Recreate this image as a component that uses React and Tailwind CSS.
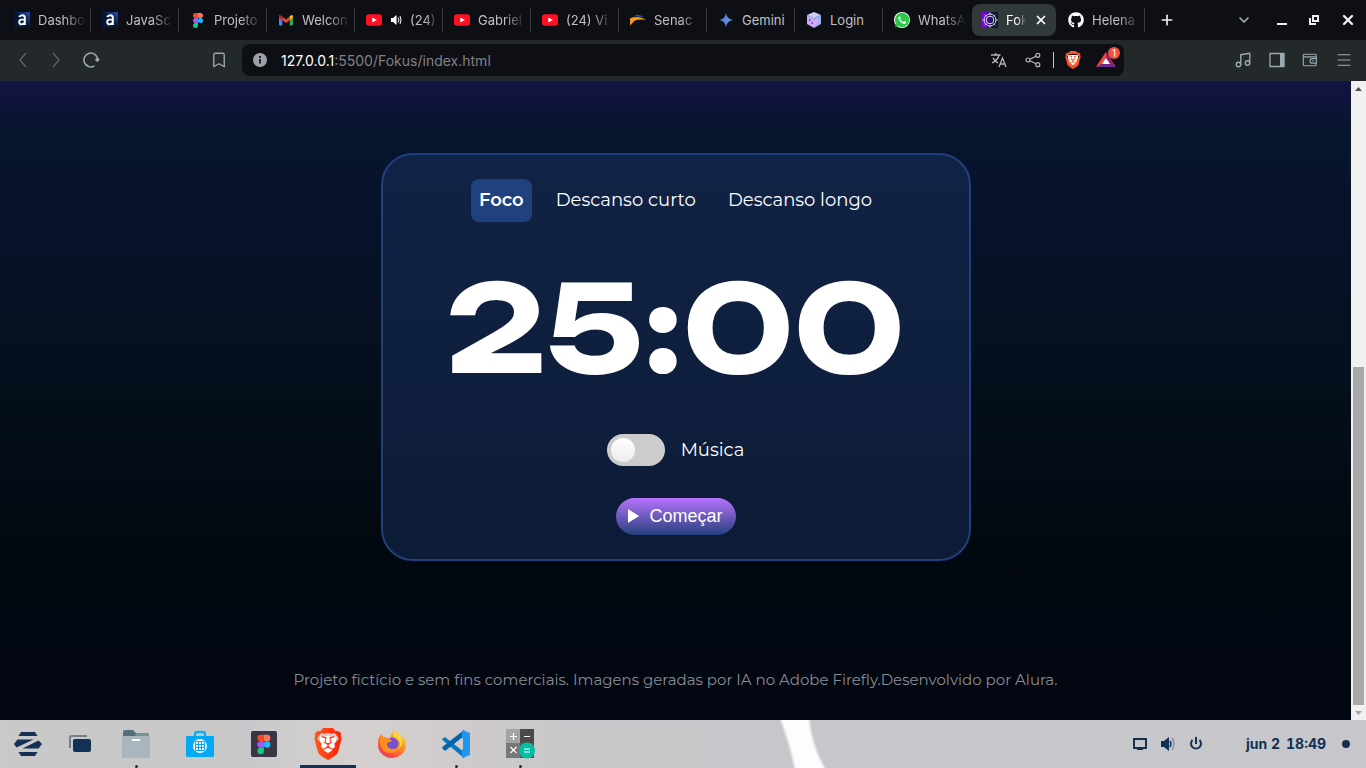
import { useState } from "react";
import { FaGithub, FaWhatsapp } from "react-icons/fa";
import { SiBrave } from "react-icons/si";
import { ChevronDown, Menu, Bookmark, Music, Plus, X } from "lucide-react";

const AluraIcon = () => (
  <svg viewBox="0 0 16 16" className="size-4">
    <defs>
      <linearGradient id="alura" x1="0" y1="1" x2="1" y2="0">
        <stop offset=".5" stopColor="#051733" />
        <stop offset="1" stopColor="#2454b8" />
      </linearGradient>
    </defs>
    <rect width="16" height="16" fill="url(#alura)" />
    <path d="M5.2 5.2Q6 3.2 8.2 3.2q2.7 0 2.7 2.8v7M10.8 7.6H7.6q-2.6.2-2.4 2.6.2 2.2 2.6 2.2 2.4-.2 3-2.6" fill="none" stroke="#fff" strokeWidth="1.9" />
  </svg>
);

const FigmaMark = () => (
  <>
    <path d="M8 1H5.5a2.5 2.5 0 0 0 0 5H8z" fill="#f24e1e" />
    <path d="M8 1h2.500a2.500 2.500 0 0 1 0 5H8z" fill="#ff7262" />
    <path d="M8 6H5.500a2.500 2.500 0 0 0 0 5H8z" fill="#a259ff" />
    <circle cx="10.500" cy="8.500" r="2.500" fill="#1abcfe" />
    <path d="M5.500 11H8v2.500A2.500 2.500 0 1 1 5.500 11z" fill="#0acf83" />
  </>
);

const FigmaIcon = () => <svg viewBox="0 0 16 16" className="size-4"><FigmaMark /></svg>;

const GmailIcon = () => (
  <svg viewBox="0 0 16 16" className="size-4">
    <path d="M1 4.500v8q0 1 1 1h2.300V6.500L2 4z" fill="#4285f4" />
    <path d="M11.700 6.500v7H14q1 0 1-1v-8L13.500 4z" fill="#34a853" />
    <path d="M11.700 8.200V4.600l1-1Q15 2.200 15 4.600v1.100z" fill="#fbbc04" />
    <path d="M4.300 8.200V4.600L8 7.400l3.700-2.800v3.600L8 11z" fill="#ea4335" />
    <path d="M1 5.700V4.500Q1 2.200 3.300 3.700l1 .9v3.600z" fill="#c5221f" />
  </svg>
);

const YoutubeIcon = () => (
  <svg viewBox="0 0 16 16" className="size-4">
    <rect y="2.300" width="16" height="11.500" rx="3" fill="#ff1022" />
    <path d="M6.300 5.500v5l4.500-2.500z" fill="#fff" />
  </svg>
);

const SpeakerSmall = () => (
  <svg viewBox="0 0 12 12" className="size-3 shrink-0" fill="#fff">
    <path d="M1 4h2l3.500-3v10L3 8H1z" />
    <path d="M8 3.500q2 2.500 0 5M10 2q2 4 0 8" fill="none" stroke="#fff" />
  </svg>
);

const SenacIcon = () => (
  <svg viewBox="0 0 16 16" className="size-4">
    <path d="M4 4.200Q9 .8 14 5.800 9 3.800 4 4.200z" fill="#23549e" />
    <path d="M0 13.500V6.200q4-1.400 9-1 4 .5 7 2.600Q5 6.500 2.500 11z" fill="#f7981d" />
  </svg>
);

const GeminiIcon = () => (
  <svg viewBox="0 0 16 16" className="size-4">
    <defs><linearGradient id="gem"><stop stopColor="#4b74d8" /><stop offset="1" stopColor="#6c9ddd" /></linearGradient></defs>
    <path d="M8 1q.9 6.100 7 7-6.100.900-7 7-.900-6.100-7-7 6.100-.900 7-7z" fill="url(#gem)" />
  </svg>
);

const CubeIcon = () => (
  <svg viewBox="0 0 16 16" className="size-4">
    <path d="M8 0l7 3-7 3.500L1 3z" fill="#c5cdfa" />
    <path d="M1 3l7 3.500V16l-7-4z" fill="#c9aaf4" />
    <path d="M15 3L8 6.500V16l7-4z" fill="#93b2ee" />
    <path d="M8 9l5-4-1 7-4 3z" fill="#d7a8f5" />
    <path d="M3 7h1.500v2H3zM5.500 10H7v2H5.500z" fill="#6d56ba" />
  </svg>
);

const WhatsIcon = () => (
  <span className="flex size-4 items-center justify-center rounded-full bg-white">
    <svg viewBox="0 0 16 16" className="size-4">
      <path d="M8 .8a7.200 7.200 0 1 1-3.400 13.500L1 15.200l1-3.500A7.200 7.200 0 0 1 8 .8z" fill="#2cc64a" />
      <path d="M5.300 4.200q-1.500 1-.6 3 1.500 3.300 4.600 4.500 2 .7 2.800-1v-.9L10.200 8.900l-1 1.100Q7 9.200 6 7.200l.8-1-.8-2z" fill="#fff" />
    </svg>
  </span>
);

const FokusIcon = () => (
  <svg viewBox="0 0 16 16" className="size-4 shrink-0">
    <defs><linearGradient id="fok"><stop stopColor="#8d00ff" /><stop offset=".7" stopColor="#0b1732" /></linearGradient></defs>
    <rect width="16" height="16" fill="url(#fok)" />
    <g fill="none" stroke="#d6d8ee">
      <circle cx="8" cy="8" r="6" />
      <circle cx="8" cy="8" r="3.800" />
      <path d="M8 0v3M8 13v3M0 8h3M13 8h3M2.500 2.500l2 2M11.500 11.500l2 2M13.500 2.500l-2 2M2.500 13.500l2-2" strokeWidth=".7" />
    </g>
  </svg>
);

const TABS = [
  { title: "Dashbo", Icon: AluraIcon },
  { title: "JavaSc", Icon: AluraIcon },
  { title: "Projeto", Icon: FigmaIcon },
  { title: "Welcon", Icon: GmailIcon },
  { title: "(24)", Icon: YoutubeIcon, audio: true },
  { title: "Gabriel", Icon: YoutubeIcon },
  { title: "(24) Vi", Icon: YoutubeIcon },
  { title: "Senac", Icon: SenacIcon },
  { title: "Gemini", Icon: GeminiIcon, whole: true },
  { title: "Login", Icon: CubeIcon, whole: true },
  { title: "WhatsA", Icon: WhatsIcon, last: true },
  { title: "Fok", Icon: FokusIcon, active: true },
  { title: "Helena", Icon: () => <FaGithub className="size-4 text-white" /> },
];

const FADE = "[mask-image:linear-gradient(to_right,black_55%,transparent)]";

function Tab({ title, Icon, audio, active, whole, last }) {
  if (active)
    return (
      <div className="mx-px my-1 flex w-21 shrink-0 items-center gap-2 rounded-lg bg-[#31393b] px-2 pl-2.5 text-white">
        <Icon />
        <button className={`min-w-0 flex-1 pt-px text-left whitespace-nowrap ${FADE}`}>{title}</button>
        <button aria-label="Fechar aba" className="shrink-0"><X className="size-3.5" strokeWidth={3} /></button>
      </div>
    );
  return (
    <button className="flex w-22 shrink-0 items-center py-2 text-left text-[#c0c0c3]">
      <span className="flex min-w-0 flex-1 items-center gap-2 pr-1 pl-[11px]">
        <span className="shrink-0"><Icon /></span>
        {audio && <SpeakerSmall />}
        <span className={`min-w-0 flex-1 pt-px whitespace-nowrap ${whole ? "" : FADE}`}>{title}</span>
      </span>
      <span className={`h-6 w-px ${last ? "" : "bg-[#3b3c3e]"}`} />
    </button>
  );
}

function TabStrip() {
  return (
    <div className="flex h-10 items-stretch bg-[#0e0f14] pl-[3px] text-[13px]">
      {TABS.map((t, i) => <Tab key={i} {...t} />)}
      <div className="flex flex-1 items-center gap-6 pr-2.5 pl-3.5 text-[#eceef0]">
        <button aria-label="Nova aba" className="mr-auto"><Plus className="size-4" strokeWidth={2.500} /></button>
        <button aria-label="Pesquisar abas"><ChevronDown className="size-4 text-[#a3b1b8]" strokeWidth={2.500} /></button>
        <div className="flex items-center gap-5">
          <button aria-label="Minimizar">
            <svg viewBox="0 0 12 12" className="size-3"><path d="M1 10h10" stroke="currentColor" strokeWidth="2" /></svg>
          </button>
          <button aria-label="Restaurar">
            <svg viewBox="0 0 12 12" className="size-3" fill="none" stroke="currentColor" strokeWidth="2"><path d="M5 2h5v5H5zM2 4v6h6" /></svg>
          </button>
          <button aria-label="Fechar"><X className="size-4" strokeWidth={3.500} /></button>
        </div>
      </div>
    </div>
  );
}

function Toolbar() {
  return (
    <div className="flex h-[41px] items-center bg-[#23292b] pb-px text-[#9aa8b0]">
      <div className="flex w-[242px] shrink-0 items-center pr-3.5 pl-3">
        <button aria-label="Voltar" className="mr-3.5 text-[#596165]">
          <svg viewBox="0 0 20 20" className="size-5" fill="none" stroke="currentColor" strokeWidth="1.500"><path d="M14 3L8 10l6 7" /></svg>
        </button>
        <button aria-label="Avançar" className="mr-4 text-[#596165]">
          <svg viewBox="0 0 20 20" className="size-5" fill="none" stroke="currentColor" strokeWidth="1.500"><path d="M7 3l6 7-6 7" /></svg>
        </button>
        <button aria-label="Recarregar">
          <svg viewBox="0 0 18 18" className="size-[18px]" fill="none" stroke="currentColor" strokeWidth="1.500">
            <path d="M12.500 14.800A6.900 6.900 0 1 1 15.700 8.500" />
            <circle cx="15.300" cy="8.800" r="2" fill="currentColor" stroke="none" />
          </svg>
        </button>
        <button aria-label="Favoritar" className="ml-auto"><Bookmark className="size-[18px]" strokeWidth={1.800} /></button>
      </div>
      <div className="flex h-8 w-[882px] min-w-0 items-center rounded-lg bg-[#0e0f14] pr-2 pl-[11px] text-[#b4b6ba]">
        <svg viewBox="0 0 14 14" className="size-3.5 shrink-0"><circle cx="7" cy="7" r="7" fill="#9b9fa8" /><path d="M7 3v2M7 6v4.500" stroke="#15161b" strokeWidth="1.800" /></svg>
        <a href="#fokus" className="ml-3.5 text-[14px] text-[#808186]"><span className="text-white">127.0.0.1</span>:5500/Fokus/index.html</a>
        <div className="ml-auto flex items-center">
          <button aria-label="Traduzir" className="mr-[18px]">
            <svg viewBox="0 0 16 16" className="size-4" fill="none" stroke="currentColor" strokeWidth="1.300"><path d="M0 3h9.500M4.700 1v2M2 6q3 4 5 5M8 3Q7 8 1 11M8 15l3.500-9L15 15M9 12h5" /></svg>
          </button>
          <button aria-label="Compartilhar">
            <svg viewBox="0 0 16 16" className="size-4" fill="none" stroke="currentColor" strokeWidth="1.200"><circle cx="3" cy="8" r="2" /><circle cx="12.800" cy="3.300" r="2" /><circle cx="12.800" cy="12.700" r="2" /><path d="M4.800 7.200L11 4.200M4.800 8.800l6.200 3" /></svg>
          </button>
          <span className="mr-2.5 ml-3 h-4 w-px bg-[#c5c6c8]" />
          <button aria-label="Brave Shields" className="relative flex text-[#fb542b]">
            <span className="absolute inset-x-1 inset-y-1 bg-white" /><SiBrave className="relative size-[18px]" />
          </button>
          <button aria-label="Brave Rewards" className="relative ml-3.5">
            <svg viewBox="0 0 20 18" className="h-[18px] w-5"><path d="M10 1L0 16h20z" fill="#662d91" /><path d="M10 1L0 16l6-3.500L10 7z" fill="#ff4724" /><path d="M10 1v6l4 6 6 3z" fill="#9e1f63" /><path d="M10 7l-4 6h8z" fill="#fff" /></svg>
            <span className="absolute -top-1 -right-1 size-3 rounded-full bg-[#fa5333] text-center text-[10px] leading-3 text-white">1</span>
          </button>
        </div>
      </div>
      <div className="ml-auto flex items-center gap-[17px] pr-[13px]">
        <button aria-label="Playlist"><Music className="size-[18px]" strokeWidth={1.800} /></button>
        <button aria-label="Painel lateral">
          <svg viewBox="0 0 16 16" className="size-4"><path d="M1 1.500h14v13H1z" fill="none" stroke="currentColor" strokeWidth="1.300" /><path d="M11 1.500h4v13h-4z" fill="currentColor" /></svg>
        </button>
        <button aria-label="Carteira">
          <svg viewBox="0 0 18 16" className="h-4 w-4" fill="none" stroke="currentColor" strokeWidth="1.300"><path d="M16 5V3q0-1.500-1.500-1.500h-11Q1.500 1.500 1.500 3v10q0 1.500 1.500 1.500h11.500q1.500 0 1.500-1.500v-1.500M1.500 4.500H15q1.200 0 1.200 1.200v5.800H11.500a2.500 2.500 0 0 1 0-5h4.500M11.500 9h1.500" /></svg>
        </button>
        <button aria-label="Menu"><Menu className="size-[18px]" strokeWidth={1.500} /></button>
      </div>
    </div>
  );
}

const MODES = ["Foco", "Descanso curto", "Descanso longo"];

function Timer() {
  const [mode, setMode] = useState(MODES[0]);
  return (
    <section className="flex w-full max-w-[590px] flex-col items-center rounded-[32px] border-2 border-[#213f7c] bg-linear-to-b from-[#112346] to-[#0c1b36] p-6 text-white">
      <nav className="flex gap-4 font-[Montserrat,Open_Sans,sans-serif] text-[18px]">
        {MODES.map((m) => (
          <button
            key={m}
            onClick={() => setMode(m)}
            className={`h-[43px] rounded-lg px-2 whitespace-nowrap ${m === mode ? "bg-[#21407e] font-semibold" : ""}`}
          >
            {m}
          </button>
        ))}
      </nav>
      <div className="mt-6 font-[Unbounded,DejaVu_Sans,sans-serif] text-[120px] leading-[164px] font-bold">25:00</div>
      <label className="mt-6 flex items-center gap-4 font-[Montserrat,Open_Sans,sans-serif] text-[18px] leading-8">
        <input type="checkbox" className="peer sr-only" />
        <span className="flex h-8 w-[58px] items-center rounded-full bg-[#ccc] p-1 peer-checked:justify-end">
          <span className="size-6 rounded-full bg-linear-to-b from-white to-[#ececec]" />
        </span>
        Música
      </label>
      <button className="mt-8 flex h-[37px] w-[120px] items-center gap-2.5 rounded-full bg-linear-to-b from-[#b872ff] to-[#21407e] pb-px pl-3 font-[Liberation_Sans,sans-serif] text-lg">
        <svg viewBox="0 0 12 14" className="h-3.5 w-3 fill-white"><path d="M0 0l11 7-11 7z" /></svg>
        Começar
      </button>
    </section>
  );
}

function Scrollbar() {
  return (
    <div className="flex w-[15px] shrink-0 flex-col items-center bg-[#f1f1f1]">
      <svg viewBox="0 0 15 15" className="size-[15px]"><path d="M4 10l3.500-4L11 10z" fill="#505050" /></svg>
      <div className="flex-[271]" />
      <div className="w-[11px] flex-[338] bg-[#a8a8a8]" />
      <svg viewBox="0 0 15 15" className="size-[15px]"><path d="M4 6l3.500 4L11 6z" fill="#a3a3a3" /></svg>
    </div>
  );
}

const ZorinIcon = () => (
  <svg viewBox="0 0 28 26" className="h-[26px] w-7 fill-[#123154]"><path d="M7 1h14l2.500 4h-19zM7 25h14l2.500-4h-19zM3.500 8.500h16L2.500 16.500 0 13zM24.500 9.500L28 13l-3.500 4.500h-16z" /></svg>
);
const WindowsIcon = () => (
  <svg viewBox="0 0 24 18" className="h-[18px] w-6"><path d="M2 13V2.500Q2 1 3.500 1H19" fill="none" stroke="#708090" strokeWidth="2" /><rect x="5" y="4" width="18" height="13" rx="2" fill="#123154" /></svg>
);
const FolderIcon = () => (
  <svg viewBox="0 0 28 30" className="h-[30px] w-7"><path d="M1 3q0-2 2-2h8l3 3h13v6H1z" fill="#546e7a" /><path d="M14 4h12q1 0 1 1v2H13z" fill="#78909c" /><rect y="7" width="28" height="22" rx="1" fill="#a9b6bd" /><rect x="10" y="10" width="8" height="2" fill="#fff" /></svg>
);
const StoreIcon = () => (
  <svg viewBox="0 0 28 28" className="size-7"><path d="M9 7V4q0-2 2-2h6q2 0 2 2v3" fill="none" stroke="#14aef5" strokeWidth="2.300" /><rect y="6" width="28" height="21" rx="1" fill="#03a9f4" /><circle cx="14" cy="16" r="7" fill="#fff" /><path d="M9.500 11.500h9v9h-9zM12.500 11v10M15.500 11v10M9 14.500h10M9 17.500h10" fill="none" stroke="#03a9f4" /></svg>
);
const FigmaAppIcon = () => (
  <svg viewBox="0 0 26 26" className="size-[26px]"><rect width="26" height="26" rx="2" fill="#3a3444" /><g transform="translate(2.500 2.500) scale(1.300)"><FigmaMark /></g></svg>
);
const BraveAppIcon = () => (
  <span className="relative flex">
    <svg className="absolute size-0"><defs><linearGradient id="brv"><stop stopColor="#ff5a1c" /><stop offset="1" stopColor="#ff1f05" /></linearGradient></defs></svg>
    <span className="absolute inset-2 bg-white" />
    <SiBrave className="relative size-8" fill="url(#brv)" />
  </span>
);
const FirefoxIcon = () => (
  <svg viewBox="0 0 28 28" className="size-7">
    <defs>
      <linearGradient id="fx" x1="1" y1="0" x2=".2" y2="1"><stop offset=".1" stopColor="#ffde3c" /><stop offset=".45" stopColor="#ff8a24" /><stop offset="1" stopColor="#f52f5b" /></linearGradient>
    </defs>
    <path d="M17 0q2 4 5 5v3l1 1V5q5 4 5 10A14 13.500 0 1 1 0 14Q0 8 3 4l1 4 3-1 5 2Q13 3 17 0z" fill="url(#fx)" />
    <circle cx="14" cy="14" r="6.500" fill="#7652cf" />
    <path d="M2 8l2-3 2 3 6 1 2 2-5 2q-1 5 5 6 5 0 8-3-2 7-9 7Q3 23 2 13z" fill="#ff8d20" />
    <path d="M17 0q-3 4-1 7 5 1 6 6 0 5-3 7 7-4 5-12-2-2-3-3-2-1-4-5z" fill="#ffd53a" />
  </svg>
);
const CodeIcon = () => (
  <svg viewBox="0 0 28 28" className="size-7"><path d="M0 9l3-2 19 15v6L1 10.500z" fill="#0879bf" /><path d="M0 18l3 3L22 6V0L1 16.500z" fill="#0065a9" /><path d="M21 0l7 3v22l-7 3-1-1V1z" fill="#2196ee" /><path d="M21 8v12l-8-6z" fill="#cfcbcd" /></svg>
);
const CalcIcon = () => (
  <svg viewBox="0 0 30 30" className="size-[30px]"><path d="M1 0h14v14H1z" fill="#a3a3a3" /><path d="M15 0h14v14H15z" fill="#4a4a4a" /><path d="M1 14h14v15H1z" fill="#777" /><path d="M15 14h14v15H15z" fill="#555" /><circle cx="22" cy="21.500" r="8" fill="#00bfa5" /><g stroke="#fff" strokeWidth="1.200"><path d="M5 7.500h7M8.500 4v7M19 7.500h6M5.500 18l6 6M11.500 18l-6 6M19 20h6M19 23h6" /></g></svg>
);

const APPS = [
  { name: "Zorin", Icon: ZorinIcon, narrow: true },
  { name: "Janelas", Icon: WindowsIcon, narrow: true },
  { name: "Arquivos", Icon: FolderIcon, open: true },
  { name: "Loja", Icon: StoreIcon },
  { name: "Figma", Icon: FigmaAppIcon },
  { name: "Brave", Icon: BraveAppIcon, active: true },
  { name: "Firefox", Icon: FirefoxIcon },
  { name: "VS Code", Icon: CodeIcon, open: true },
  { name: "Calculadora", Icon: CalcIcon, open: true },
];

function Taskbar() {
  return (
    <footer className="relative flex h-12 shrink-0 items-center bg-[linear-gradient(to_right,#cac8c8_0%,#c8c8ca_18%,#d6d1d0_26%,#cfcbcd_33%,#c9c7c9_42%,#c5c7cc_60%,#c8c7cb_100%)] text-[#123154]">
      <svg viewBox="0 0 50 48" className="absolute left-[57%] h-12 w-[50px]"><path d="M1 -2h29Q33 28 47 50H16Q12 28 1 -2z" fill="#fcfdfc" className="blur-[1px]" /></svg>
      <div className="relative flex">
        {APPS.map(({ name, Icon, narrow, open, active }) => (
          <button key={name} aria-label={name} className={`relative flex h-12 items-center justify-center ${narrow ? "w-12 first:w-14" : "w-16"}`}>
            <Icon />
            {open && <span className="absolute bottom-0 size-[3px] rounded-full bg-[#123154]" />}
            {active && <span className="absolute bottom-0 h-[3px] w-14 bg-[#123154]" />}
          </button>
        ))}
      </div>
      <div className="relative ml-auto flex items-center pr-4">
        <button aria-label="Sistema" className="flex gap-3">
          <svg viewBox="0 0 16 16" className="size-4" fill="none" stroke="currentColor" strokeWidth="2"><path d="M2 3h12v9H2zM5 13h6" /></svg>
          <svg viewBox="0 0 16 16" className="size-4"><path d="M1 5h3l5-4v14l-5-4H1z" fill="currentColor" /><path d="M10 5q2 3 0 6" fill="none" stroke="currentColor" strokeWidth="1.500" /><path d="M12 2q4 6 0 12" fill="none" stroke="#8795a5" strokeWidth="1.500" /></svg>
          <svg viewBox="0 0 16 16" className="size-4" fill="none" stroke="currentColor" strokeWidth="2"><path d="M4.500 4a5 5 0 1 0 7 0M8 1v7" /></svg>
        </button>
        <span className="ml-[42px] flex gap-1.5 text-[14px] leading-5 font-bold tabular-nums"><span>jun 2</span><span>18:49</span></span>
        <span className="ml-4 size-2 rounded-full bg-[#123154]" />
      </div>
    </footer>
  );
}

export default function App() {
  return (
    <div className="flex min-h-screen flex-col font-[Inter,sans-serif]">
      <header>
        <TabStrip />
        <Toolbar />
      </header>
      <div className="flex flex-1">
        <main id="fokus" className="flex flex-1 flex-col items-center bg-[linear-gradient(to_bottom,#141344_0%,#08152f_7%,#061229_25%,#051120_40%,#02080f_75%,#010612_100%)] px-6 pt-18">
          <Timer />
          <p className="mt-auto pb-7 text-center font-[Montserrat,Open_Sans,sans-serif] text-[15px] leading-6 text-[#898d94]">
            Projeto fictício e sem fins comerciais. Imagens geradas por IA no Adobe Firefly.Desenvolvido por Alura.
          </p>
        </main>
        <Scrollbar />
      </div>
      <Taskbar />
    </div>
  );
}
